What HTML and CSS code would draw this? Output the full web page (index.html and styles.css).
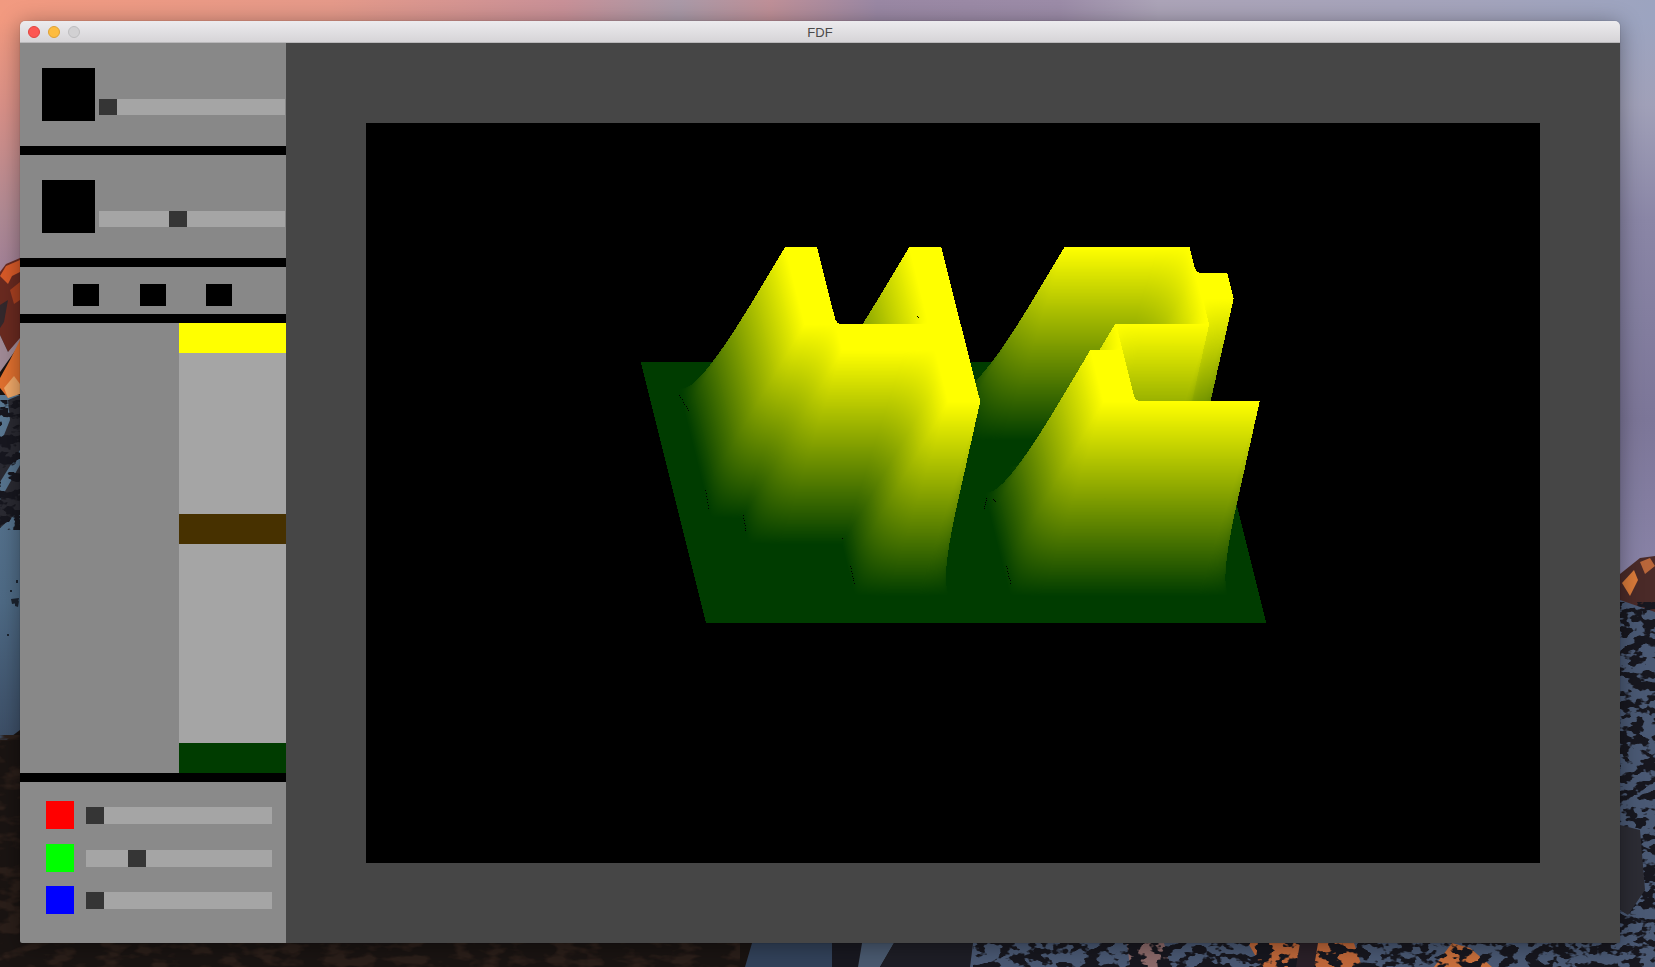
FILE: index.html
```html
<html>

<head>
    <title>FDF</title>
    <link rel="stylesheet" href="styles.css">
</head>

<body>
    <svg class="wallpaper" viewBox="0 0 1655 967" aria-hidden="true">
        <defs>
            <linearGradient id="skyTop">
                <stop offset="0" stop-color="#f29a80" />
                <stop offset=".2" stop-color="#e59a8a" />
                <stop offset=".34" stop-color="#c99198" />
                <stop offset=".41" stop-color="#aa9aa8" />
                <stop offset=".465" stop-color="#bf9098" />
                <stop offset=".53" stop-color="#9a88a4" />
                <stop offset=".64" stop-color="#9c8ca8" />
                <stop offset=".7" stop-color="#aca4b8" />
                <stop offset=".89" stop-color="#a4a4bc" />
                <stop offset="1" stop-color="#9ca4c0" />
            </linearGradient>
            <linearGradient id="skyLeft" x2="0" y2="1">
                <stop offset="0" stop-color="#f29a80" />
                <stop offset=".35" stop-color="#d89088" />
                <stop offset=".75" stop-color="#b08a94" />
                <stop offset="1" stop-color="#a08098" />
            </linearGradient>
            <linearGradient id="skyRight" x2="0" y2="1">
                <stop offset="0" stop-color="#9ca4c0" />
                <stop offset=".15" stop-color="#a0a0b8" />
                <stop offset=".35" stop-color="#8a86a6" />
                <stop offset=".7" stop-color="#7c7698" />
                <stop offset="1" stop-color="#8a84a8" />
            </linearGradient>
            <linearGradient id="snowLeft" x2="0" y2="1">
                <stop offset="0" stop-color="#5c7a94" />
                <stop offset=".6" stop-color="#4e6a85" />
                <stop offset="1" stop-color="#3c4e66" />
            </linearGradient>
            <filter id="blotch" x="0" y="0" width="100%" height="100%" color-interpolation-filters="sRGB">
                <feTurbulence type="fractalNoise" baseFrequency=".07 .11" numOctaves="3" seed="4" />
                <feColorMatrix values="0 0 0 0 .09  0 0 0 0 .09  0 0 0 0 .12  0 0 0 14 -6.6" />
                <feComposite in2="SourceGraphic" operator="in" />
            </filter>
            <filter id="rocks" x="0" y="0" width="100%" height="100%" color-interpolation-filters="sRGB">
                <feTurbulence type="fractalNoise" baseFrequency=".04 .09" numOctaves="3" seed="9" />
                <feColorMatrix values="0 0 0 0 .17  0 0 0 0 .12  0 0 0 0 .1  0 0 0 5 -2.4" />
                <feComposite in2="SourceGraphic" operator="in" />
            </filter>
        </defs>

        <rect width="1655" height="40" fill="url(#skyTop)" />
        <rect y="20" width="40" height="260" fill="url(#skyLeft)" />
        <rect x="1600" y="20" width="55" height="570" fill="url(#skyRight)" />

        <!-- left strip -->
        <rect y="395" width="40" height="345" fill="url(#snowLeft)" />
        <polygon points="0,272 6,264 20,258 40,250 40,345 8,352 0,335" fill="#6a2a20" />
        <polygon points="0,276 6,266 20,260 20,272 12,276 8,284" fill="#d85a28" />
        <polygon points="10,290 20,282 20,300 14,304" fill="#a84020" />
        <polygon points="0,305 8,300 4,322 0,328" fill="#33282c" />
        <polygon points="0,335 8,352 20,338 20,344 0,372" fill="#a08a96" />
        <polygon points="20,340 20,392 8,398 0,388 0,378 10,360" fill="#e0702f" />
        <polygon points="4,388 14,376 20,384 20,394 8,398" fill="#f0a868" />
        <polygon points="20,395 8,400 10,420 0,445 0,482 20,450" fill="#2a2a32" />
        <polygon points="20,465 0,500 0,528 20,510" fill="#2a2a32" />
        <rect y="400" width="40" height="130" fill="#000" filter="url(#blotch)" />
        <polygon points="11,599 19,598 18,603 12,604" fill="#1c2430" />
        <polygon points="15,602 19,601 18,607 15,606" fill="#1c2430" />
        <rect x="16" y="580" width="2" height="3" fill="#1c2430" />
        <rect x="10" y="590" width="2" height="2" fill="#1c2430" />
        <rect x="7" y="634" width="2" height="2" fill="#1c2430" />
        <polygon points="0,745 20,730 40,725 40,967 0,967" fill="#1a1412" />
        <rect y="735" width="40" height="232" fill="#000" filter="url(#rocks)" />

        <!-- right strip -->
        <rect x="1600" y="590" width="55" height="377" fill="#4a5974" />
        <polygon points="1600,590 1640,558 1655,556 1655,612 1620,600" fill="#4a2a28" />
        <polygon points="1622,583 1634,570 1638,580 1630,596" fill="#d87a3a" />
        <polygon points="1640,562 1650,558 1655,566 1645,574" fill="#b8663a" />
        <rect x="1600" y="602" width="55" height="365" fill="#000" filter="url(#blotch)" />
        <polygon points="1620,825 1640,830 1645,890 1628,915 1620,910" fill="#2c2c34" />

        <!-- bottom strip -->
        <rect y="940" width="790" height="27" fill="#1a1412" />
        <rect y="940" width="740" height="27" fill="#000" filter="url(#rocks)" />
        <polygon points="752,943 832,943 832,967 745,967" fill="#32425a" />
        <polygon points="832,943 862,943 858,967 832,967" fill="#181820" />
        <polygon points="862,943 894,943 880,967 858,967" fill="#4a5a70" />
        <polygon points="894,943 973,943 970,967 880,967" fill="#1e1e26" />
        <polygon points="973,943 1655,943 1655,967 970,967" fill="#4a5974" />
        <polygon points="1127,943 1164,943 1170,967 1130,967" fill="#8c6a6a" />
        <polygon points="1248,943 1354,943 1362,967 1262,967" fill="#c0683a" />
        <polygon points="1452,943 1470,948 1492,967 1434,967" fill="#c9703c" />
        <rect x="973" y="940" width="682" height="27" fill="#000" filter="url(#blotch)" />
        <polygon points="1300,943 1318,943 1314,967 1296,967" fill="#2a2028" />
    </svg>

    <div class="window">
        <div class="titlebar">
            <div class="lights">
                <span class="light red"></span>
                <span class="light yellow"></span>
                <span class="light off"></span>
            </div>
            <span class="title">FDF</span>
        </div>

        <div class="content">
            <div class="sidebar">
                <div class="panel panel_slider">
                    <div class="square"></div>
                    <div class="slider slider_high"><div class="thumb"></div></div>
                </div>
                <div class="panel panel_slider">
                    <div class="square"></div>
                    <div class="slider slider_high"><div class="thumb" style="margin-left:70px"></div></div>
                </div>
                <div class="panel panel_buttons">
                    <div class="button"></div>
                    <div class="button"></div>
                    <div class="button"></div>
                </div>
                <div class="panel panel_ramp">
                    <div class="ramp">
                        <div class="stop stop_yellow"></div>
                        <div class="stop stop_brown"></div>
                        <div class="stop stop_green"></div>
                    </div>
                </div>
                <div class="panel panel_rgb">
                    <div class="rgb_row">
                        <div class="swatch swatch_red"></div>
                        <div class="slider"><div class="thumb"></div></div>
                    </div>
                    <div class="rgb_row">
                        <div class="swatch swatch_green"></div>
                        <div class="slider"><div class="thumb" style="margin-left:42px"></div></div>
                    </div>
                    <div class="rgb_row">
                        <div class="swatch swatch_blue"></div>
                        <div class="slider"><div class="thumb"></div></div>
                    </div>
                </div>
            </div>

            <div class="main">
                <canvas id="view" width="1174" height="740"></canvas>
            </div>
        </div>
    </div>

    <script src="fdf.js"></script>
</body>

</html>
```

FILE: styles.css
```css
html,
body {
    margin: 0;
    height: 100%;
    overflow: hidden;
}

body {
    padding: 21px 35px 24px 20px;
    box-sizing: border-box;
    background-color: #1a1412;
    font-family: "Liberation Sans", Arial, sans-serif;
}

.wallpaper {
    position: absolute;
    top: 0;
    left: 0;
    width: 1655px;
    height: 967px;
    z-index: -1;
}

.window {
    display: flex;
    flex-direction: column;
    height: 922px;
    border-radius: 5px 5px 2px 2px;
    overflow: hidden;
    box-shadow: 0 3px 22px rgba(0, 0, 0, 0.38), 0 0 1px rgba(0, 0, 0, 0.5);
}

.titlebar {
    position: relative;
    display: flex;
    align-items: center;
    justify-content: center;
    flex: none;
    height: 21px;
    border-bottom: 1px solid #b9b8ba;
    background: linear-gradient(#ecebee, #d6d4d7);
}

.lights {
    position: absolute;
    top: 5px;
    left: 8px;
    display: flex;
    gap: 8px;
}

.light {
    width: 12px;
    height: 12px;
    box-sizing: border-box;
    border-radius: 50%;
    border: 1px solid transparent;
}

.red {
    background-color: #fc5753;
    border-color: #e0443e;
}

.yellow {
    background-color: #fdbc40;
    border-color: #dea034;
}

.off {
    background-color: #d2d1d3;
    border-color: #bdbcbe;
}

.title {
    padding-top: 1px;
    font-size: 13px;
    color: #4a4a4a;
}

.content {
    display: flex;
    flex: 1;
    min-height: 0;
}

.sidebar {
    display: flex;
    flex-direction: column;
    flex: none;
    width: 266px;
    background-color: #000;
    gap: 9px;
}

.panel {
    background-color: #888888;
}

.panel_slider {
    display: flex;
    align-items: flex-start;
    flex: none;
    height: 78px;
    padding: 25px 0 0 22px;
}

.square {
    flex: none;
    width: 53px;
    height: 53px;
    background-color: #000;
}

.slider {
    display: flex;
    flex: none;
    width: 186px;
    height: 17px;
    background-color: #a5a5a5;
}

.slider_high {
    height: 16px;
    margin: 31px 0 0 4px;
}

.thumb {
    width: 18px;
    background-color: #353535;
}

.panel_buttons {
    display: flex;
    flex: none;
    height: 30px;
    padding: 17px 0 0 53px;
    gap: 40.5px;
}

.button {
    width: 26px;
    height: 22px;
    background-color: #000;
}

.panel_ramp {
    display: flex;
    justify-content: flex-end;
    flex: none;
    height: 450px;
}

.ramp {
    display: flex;
    flex-direction: column;
    width: 107px;
    background-color: #a5a5a5;
}

.stop {
    height: 30px;
}

.stop_yellow {
    background-color: #ffff00;
}

.stop_brown {
    margin-top: 161px;
    background-color: #473100;
}

.stop_green {
    margin-top: auto;
    background-color: #003c00;
}

.panel_rgb {
    display: flex;
    flex-direction: column;
    flex: 1;
    padding: 19px 0 0 26px;
    gap: 14px;
    background-color: #8a8a8a;
}

.rgb_row {
    display: flex;
    align-items: center;
    gap: 12px;
}

.rgb_row:nth-child(2) {
    margin-top: 1px;
}

.swatch {
    width: 28px;
    height: 28px;
}

.swatch_red {
    background-color: #ff0000;
}

.swatch_green {
    background-color: #00ff00;
}

.swatch_blue {
    background-color: #0000ff;
}

.main {
    display: flex;
    flex: 1;
    padding: 80px;
    background-color: #464646;
}

#view {
    display: block;
    width: 1174px;
    height: 740px;
    background-color: #000;
}
```

FILE: fdf.js
```js
// 42.fdf height map
var map = [
    [0, 0, 0, 0, 0, 0, 0, 0, 0, 0, 0, 0, 0, 0, 0, 0, 0, 0, 0],
    [0, 0, 0, 0, 0, 0, 0, 0, 0, 0, 0, 0, 0, 0, 0, 0, 0, 0, 0],
    [0, 0, 10, 10, 0, 0, 10, 10, 0, 0, 0, 10, 10, 10, 10, 10, 0, 0, 0],
    [0, 0, 10, 10, 0, 0, 10, 10, 0, 0, 0, 0, 0, 0, 0, 10, 10, 0, 0],
    [0, 0, 10, 10, 0, 0, 10, 10, 0, 0, 0, 0, 0, 0, 0, 10, 10, 0, 0],
    [0, 0, 10, 10, 10, 10, 10, 10, 0, 0, 0, 0, 10, 10, 10, 10, 0, 0, 0],
    [0, 0, 0, 10, 10, 10, 10, 10, 0, 0, 0, 10, 10, 0, 0, 0, 0, 0, 0],
    [0, 0, 0, 0, 0, 0, 10, 10, 0, 0, 0, 10, 10, 0, 0, 0, 0, 0, 0],
    [0, 0, 0, 0, 0, 0, 10, 10, 0, 0, 0, 10, 10, 10, 10, 10, 10, 0, 0],
    [0, 0, 0, 0, 0, 0, 0, 0, 0, 0, 0, 0, 0, 0, 0, 0, 0, 0, 0],
    [0, 0, 0, 0, 0, 0, 0, 0, 0, 0, 0, 0, 0, 0, 0, 0, 0, 0, 0]
];

var originX = 275, originY = 239;
var colStep = 31.05, rowStep = 25.97, rowShear = 6.5;
var liftX = 6.88, liftY = 16.63, liftPerRow = 0.03;
var steps = 250;

// little gaps left in the mesh, [x, y, dx, dy, count]
var holes = [
    [313, 272, 1.3, 2.2, 8],
    [339, 367, 0.5, 3, 7],
    [377, 392, 0.4, 2.5, 7],
    [476, 415, 0, 0, 1],
    [484, 443, 0.5, 2.4, 8],
    [620, 375, -0.5, 2, 6],
    [627, 376, 1, 1, 3],
    [640, 443, 0.6, 2.4, 8],
    [551, 193, 1, 1, 2]
];

var canvas = document.getElementById("view");
var ctx = canvas.getContext("2d");
var image = ctx.createImageData(canvas.width, canvas.height);

var plot = (x, y, h) => {
    var i = (Math.round(y) * canvas.width + Math.round(x)) * 4;
    var t = h / 10;
    image.data[i] = 255 * t;
    image.data[i + 1] = 60 + 195 * t;
    image.data[i + 2] = 0;
    image.data[i + 3] = 255;
}

// back row first, right column first, so the near left faces end on top
for (var r = 0; r < 10; r++) {
    for (var a = 0; a < steps; a++) {
        var v = a / steps;
        for (var c = 17; c >= 0; c--) {
            var left = map[r][c] * (1 - v) + map[r + 1][c] * v;
            var right = map[r][c + 1] * (1 - v) + map[r + 1][c + 1] * v;
            for (var b = steps; b >= 0; b--) {
                var u = b / steps;
                var h = left * (1 - u) + right * u;
                var x = originX + (c + u) * colStep + (r + v) * rowShear + h * liftX;
                var y = originY + (r + v) * rowStep - h * (liftY + (r + v) * liftPerRow);
                plot(x, y, h);
            }
        }
    }
}

ctx.putImageData(image, 0, 0);

ctx.fillStyle = "#000";
holes.forEach((hole) => {
    for (var i = 0; i < hole[4]; i++) {
        ctx.fillRect(Math.round(hole[0] + hole[2] * i), Math.round(hole[1] + hole[3] * i), 1, 1);
    }
});
```
